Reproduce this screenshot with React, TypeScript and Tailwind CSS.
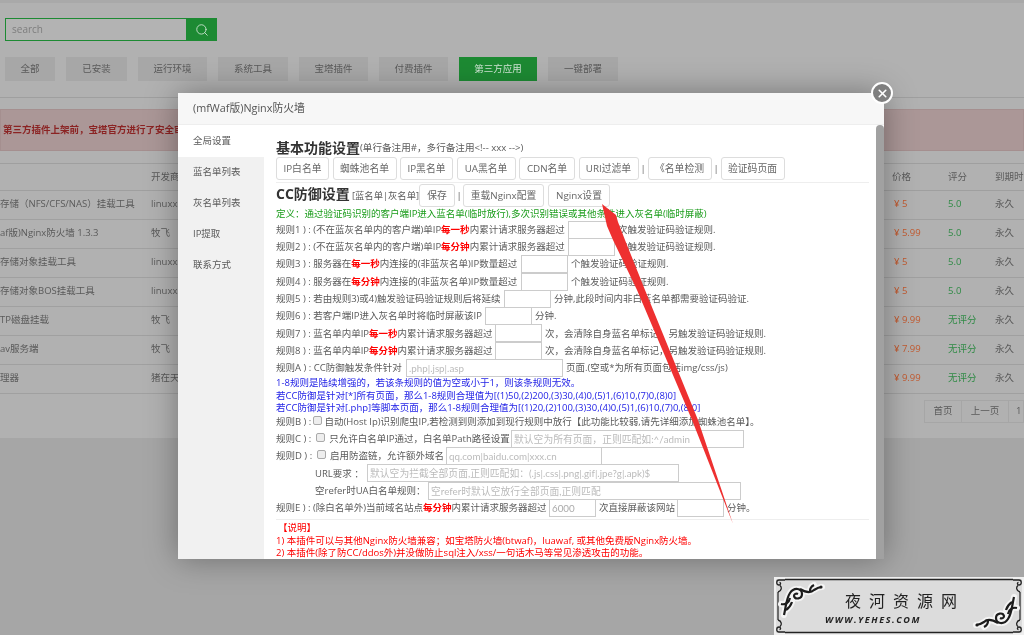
import { Search, X } from "lucide-react";
import type { ReactNode } from "react";

const tabs = [
    { name: "全部", w: "w-[50px]" },
    { name: "已安装", w: "w-[61px]" },
    { name: "运行环境", w: "w-[69px]" },
    { name: "系统工具", w: "w-[70px]" },
    { name: "宝塔插件", w: "w-[69px]" },
    { name: "付费插件", w: "w-[69px]" },
    { name: "第三方应用", w: "w-[78px]", active: true },
    { name: "一键部署", w: "w-[70px]" },
];

const rows = [
    { name: "存储（NFS/CFS/NAS）挂载工具", dev: "linuxxx", price: "5", score: "5.0" },
    { name: "af版)Nginx防火墙 1.3.3", dev: "牧飞", price: "5.99", score: "5.0" },
    { name: "存储对象挂载工具", dev: "linuxxx", price: "5", score: "5.0" },
    { name: "存储对象BOS挂载工具", dev: "linuxxx", price: "5", score: "5.0" },
    { name: "TP磁盘挂载", dev: "牧飞", price: "9.99", score: "无评分" },
    { name: "av服务端", dev: "牧飞", price: "7.99", score: "无评分" },
    { name: "理器", dev: "猪在天上飞", price: "9.99", score: "无评分" },
];

const side = ["全局设置", "蓝名单列表", "灰名单列表", "IP提取", "联系方式"];

function Btn({ w, children }: { w: string; children: ReactNode }) {
    return (
        <div className={`${w} h-[23px] shrink-0 flex items-center justify-center rounded-[3px] border border-[#ddd] text-[#666] text-[9.8px]`}>
            {children}
        </div>
    );
}

function Sep() {
    return <span className="flex w-[2px] shrink-0 justify-center text-[#666]">|</span>;
}

function Red({ children }: { children: ReactNode }) {
    return <b className="text-[#f00]">{children}</b>;
}

function Box({ w = "w-[47px]", ph, val }: { w?: string; ph?: string; val?: string }) {
    return (
        <input
            readOnly
            placeholder={ph}
            defaultValue={val}
            className={`${w} h-[18px] shrink-0 border border-[#ccc] bg-white px-[2px] font-['Lato','Noto_Sans_CJK_SC',sans-serif] text-[9.8px] text-[#aaa] placeholder:text-[#bbb] outline-none`}
        />
    );
}

function Rule({ label, children, after }: { label: string; children: ReactNode; after: string }) {
    return (
        <div className="flex h-[17.3px] items-center whitespace-nowrap">
            <span className={`${label} shrink-0`}>{children}</span>
            <Box />
            <span className="ml-[3px]">{after}</span>
        </div>
    );
}

function Check() {
    return <span className="mx-[2px] mb-[3px] inline-block h-[9px] w-[9px] shrink-0 rounded-[2px] border border-[#aaa] bg-[#eee] align-middle" />;
}

const ornament = [
    "M10 38C12 30 12 22 16 16C20 10 28 11 28 17C28 22 21 23 20 19C20 17 22 16 24 17",
    "M26 12C31 15 36 17 40 13C43 11 45 10 48 10",
    "M7 27C11 28 15 26 16 21",
    "M12 33C15 31 17 28 18 25",
    "M36 14C36 11 38 9 40 8",
];

function Watermark() {
    return (
        <svg className="absolute inset-0 h-[58px] w-[250px]" viewBox="0 0 250 58" fill="none">
            <rect width="250" height="58" fill="#dcdcdc" />
            <path d="M1 1H249V57H1Z" stroke="#efefef" strokeWidth="2" />
            <path d="M11 2.5H239M11 55.5H239" stroke="#222" strokeWidth="1.5" />
            <path d="M4 15V43M246 15V43" stroke="#222" strokeWidth="1.2" />
            {["", "translate(250 0) scale(-1 1)", "translate(0 58) scale(1 -1)", "translate(250 58) scale(-1 -1)"].map((t) => (
                <path key={t} transform={t} d="M11 3H5C2 3 2 8 5 8C7 8 7 5.5 5.5 5.5M6 8.5C8 10 8 14 4 15" stroke="#222" strokeWidth="1.3" />
            ))}
            {["", "rotate(180 125 29)"].map((t) => (
                <g key={t} transform={t}>
                    {ornament.map((d) => (
                        <path key={d} d={d} stroke="#f4f4f4" strokeWidth="6" strokeLinecap="round" />
                    ))}
                    {ornament.map((d) => (
                        <path key={d} d={d} stroke="#1c1c1c" strokeWidth="2.2" />
                    ))}
                    <circle cx="47" cy="10" r="1.6" fill="#1c1c1c" />
                </g>
            ))}
        </svg>
    );
}

export default function App() {
    return (
        <div className="relative flex h-[635px] w-full flex-col overflow-hidden bg-[#a6a6a6] font-['Open_Sans','Noto_Sans_CJK_SC',sans-serif] text-[9.5px] text-[#5a5a5a] blur-[0.3px]">
            {/* page under the dialog */}
            <div className="h-[438px] shrink-0 bg-[#b1b1b1]">
                <div className="h-[18px]"><div className="h-[3px] bg-[#a9a9a9]" /></div>
                <div className="ml-[5px] flex h-[23px] w-[212px]">
                    <div className="flex flex-1 items-center border border-[#1d8a33] bg-[#b3b3b3] pl-[6px] text-[10px] text-[#7d7d7d]">search</div>
                    <div className="flex w-[30px] items-center justify-center bg-[#1d8a33]">
                        <Search size={14} strokeWidth={1.5} className="text-[#cfe5d4]" />
                    </div>
                </div>

                <div className="mt-[16px] flex gap-[11px] pl-[5px]">
                    {tabs.map((t) => (
                        <div
                            key={t.name}
                            className={`${t.w} flex h-[24px] shrink-0 items-center justify-center ${t.active ? "bg-[#1d8a33] text-[#cfe5d4]" : "bg-[#a7a7a7] text-[#5a5a5a]"}`}
                        >
                            {t.name}
                        </div>
                    ))}
                </div>

                <div className="mt-[16px] h-[1px] bg-[#9f9f9f]" />
                <div className="mt-[11px] flex h-[42px] items-center border border-[#a58f8f] bg-[#ab9797] pl-[2px] font-bold text-[#8b2323]">
                    第三方插件上架前，宝塔官方进行了安全审核
                </div>
                <div className="mt-[12px] h-[1px] bg-[#9f9f9f]" />

                <div className="flex h-[27px] items-center border-b border-[#9f9f9f]">
                    <div className="w-[151px] shrink-0" />
                    <div className="flex-1">开发商</div>
                    <div className="w-[56px]">价格</div>
                    <div className="w-[47px]">评分</div>
                    <div className="w-[29px] overflow-hidden whitespace-nowrap">到期时间</div>
                </div>
                {rows.map((r) => (
                    <div key={r.name} className="flex h-[29px] items-center border-b border-[#a0a0a0] pb-[2px]">
                        <div className="w-[151px] shrink-0 overflow-hidden whitespace-nowrap">{r.name}</div>
                        <div className="flex-1 whitespace-nowrap">{r.dev}</div>
                        <div className="w-[56px] pl-[2px] text-[#c2592e]">¥ {r.price}</div>
                        <div className="w-[47px] text-[#2f8a45]">{r.score}</div>
                        <div className="w-[29px]">永久</div>
                    </div>
                ))}
                <div className="mt-[6px] flex justify-end">
                    <div className="flex h-[23px] w-[100px] items-center overflow-hidden border border-[#a6a6a6]">
                        <div className="flex h-full w-[37px] shrink-0 items-center justify-center border-r border-[#a6a6a6]">首页</div>
                        <div className="flex h-full w-[47px] shrink-0 items-center justify-center border-r border-[#a6a6a6]">上一页</div>
                        <div className="pl-[7px]">1</div>
                    </div>
                </div>
            </div>

            {/* dialog */}
            <div className="absolute left-[178px] top-[93px] flex h-[466px] w-[706px] flex-col bg-white shadow-[0_0_30px_rgba(0,0,0,0.35)]">
                <div className="flex h-[32px] shrink-0 items-center border-b border-[#eee] bg-[#f7f7f7] pl-[15px] text-[10.8px] text-[#555]">
                    (mfWaf版)Nginx防火墙
                </div>
                <div className="flex min-h-0 flex-1">
                    <div className="w-[86px] shrink-0 bg-[#f1f1f1]">
                        {side.map((s, i) => (
                            <div key={s} className={`flex items-center pl-[15px] ${i === 0 ? "h-[32px] bg-white" : "h-[31px]"}`}>
                                {s}
                            </div>
                        ))}
                    </div>
                    <div className="min-w-0 flex-1 pl-[12px] pt-[13px] leading-none">
                        <div className="flex h-[19px] items-center whitespace-nowrap">
                            <b className="text-[14px] text-[#333]">基本功能设置</b>
                            <span className="text-[9.6px]">(单行备注用#，多行备注用&lt;!-- xxx --&gt;)</span>
                        </div>
                        <div className="flex items-center gap-[3.5px]">
                            <Btn w="w-[53px]">IP白名单</Btn>
                            <Btn w="w-[64px]">蜘蛛池名单</Btn>
                            <Btn w="w-[53px]">IP黑名单</Btn>
                            <Btn w="w-[59px]">UA黑名单</Btn>
                            <Btn w="w-[56px]">CDN名单</Btn>
                            <Btn w="w-[60px]">URI过滤单</Btn>
                            <Sep />
                            <Btn w="w-[64px]">《名单检测</Btn>
                            <Sep />
                            <Btn w="w-[64px]">验证码页面</Btn>
                        </div>
                        <div className="mr-[15px] mt-[2px] h-[1px] bg-[#eee]" />
                        <div className="mt-[1px] flex items-center whitespace-nowrap">
                            <b className="w-[76px] shrink-0 pb-[3px] text-[14px] text-[#333]">CC防御设置</b>
                            <span className="w-[67px] shrink-0 text-[9.3px]">[蓝名单|灰名单]</span>
                            <Btn w="w-[36px]">保存</Btn>
                            <span className="w-[8px] shrink-0 text-center">|</span>
                            <Btn w="w-[81px]">重载Nginx配置</Btn>
                            <span className="w-[4px] shrink-0" />
                            <Btn w="w-[62px]">Nginx设置</Btn>
                        </div>
                        <div className="flex h-[14px] items-center whitespace-nowrap text-[#1a9c1a]">
                            定义：通过验证码识别的客户端IP进入蓝名单(临时放行),多次识别错误或其他条件进入灰名单(临时屏蔽)
                        </div>
                        <Rule label="w-[292px]" after="次触发验证码验证规则.">规则1 ) : (不在蓝灰名单内的客户端)单IP<Red>每一秒</Red>内累计请求服务器超过</Rule>
                        <Rule label="w-[292px]" after="次触发验证码验证规则.">规则2 ) : (不在蓝灰名单内的客户端)单IP<Red>每分钟</Red>内累计请求服务器超过</Rule>
                        <Rule label="w-[245px]" after="个触发验证码验证规则.">规则3 ) : 服务器在<Red>每一秒</Red>内连接的(非蓝灰名单)IP数量超过</Rule>
                        <Rule label="w-[245px]" after="个触发验证码验证规则.">规则4 ) : 服务器在<Red>每分钟</Red>内连接的(非蓝灰名单)IP数量超过</Rule>
                        <Rule label="w-[228px]" after="分钟,此段时间内非白蓝名单都需要验证码验证.">规则5 ) : 若由规则3)或4)触发验证码验证规则后将延续</Rule>
                        <Rule label="w-[209px]" after="分钟.">规则6 ) : 若客户端IP进入灰名单时将临时屏蔽该IP</Rule>
                        <Rule label="w-[219px]" after="次，会清除自身蓝名单标记，另触发验证码验证规则.">规则7 ) : 蓝名单内单IP<Red>每一秒</Red>内累计请求服务器超过</Rule>
                        <Rule label="w-[219px]" after="次，会清除自身蓝名单标记，另触发验证码验证规则.">规则8 ) : 蓝名单内单IP<Red>每分钟</Red>内累计请求服务器超过</Rule>
                        <div className="flex h-[17.3px] items-center whitespace-nowrap">
                            <span className="w-[130px] shrink-0">规则A ) : CC防御触发条件针对</span>
                            <Box w="w-[157px]" ph=".php|.jsp|.asp" />
                            <span className="ml-[3px]">页面.(空或*为所有页面包括img/css/js)</span>
                        </div>
                        <div className="whitespace-nowrap text-[#2323e6]">
                            <div className="flex h-[12.5px] items-center">1-8规则是陆续增强的，若该条规则的值为空或小于1，则该条规则无效。</div>
                            <div className="flex h-[12.5px] items-center">若CC防御是针对[*]所有页面，那么1-8规则合理值为[(1)50,(2)200,(3)30,(4)0,(5)1,(6)10,(7)0,(8)0]</div>
                            <div className="flex h-[12.5px] items-center">若CC防御是针对[.php]等脚本页面，那么1-8规则合理值为[(1)20,(2)100,(3)30,(4)0,(5)1,(6)10,(7)0,(8)0]</div>
                        </div>
                        <div className="flex h-[16px] items-center whitespace-nowrap">
                            规则B ) : <Check /> 自动(Host Ip)识别爬虫IP,若检测到则添加到现行规则中放行【此功能比较弱,请先详细添加蜘蛛池名单】。
                        </div>
                        <div className="flex h-[17.3px] items-center whitespace-nowrap">
                            <span className="w-[235px] shrink-0">规则C ) : <Check /> 只允许白名单IP通过，白名单Path路径设置</span>
                            <Box w="w-[233px]" ph="默认空为所有页面，正则匹配如:^/admin" />
                        </div>
                        <div className="flex h-[17.3px] items-center whitespace-nowrap">
                            <span className="w-[170px] shrink-0">规则D ) : <Check /> 启用防盗链，允许额外域名</span>
                            <Box w="w-[156px]" ph="qq.com|baidu.com|xxx.cn" />
                        </div>
                        <div className="flex h-[17.3px] items-center whitespace-nowrap">
                            <span className="w-[91px] shrink-0 pl-[39px]">URL要求 ：</span>
                            <Box w="w-[312px]" ph="默认空为拦截全部页面,正则匹配如：(.js|.css|.png|.gif|.jpe?g|.apk)$" />
                        </div>
                        <div className="flex h-[17.3px] items-center whitespace-nowrap">
                            <span className="w-[152px] shrink-0 pl-[39px]">空refer时UA白名单规则：</span>
                            <Box w="w-[313px]" ph="空refer时默认空放行全部页面,正则匹配" />
                        </div>
                        <div className="flex h-[17.3px] items-center whitespace-nowrap">
                            <span className="w-[273px] shrink-0">规则E ) : (除白名单外)当前域名站点<Red>每分钟</Red>内累计请求服务器超过</span>
                            <Box val="6000" />
                            <span className="w-[81px] shrink-0 pl-[3px]">次直接屏蔽该网站</span>
                            <Box />
                            <span className="ml-[3px]">分钟。</span>
                        </div>
                        <div className="mr-[15px] mt-[2px] h-[1px] bg-[#eee]" />
                        <div className="mt-[2px] whitespace-nowrap text-[#f00]">
                            <div className="flex h-[12.5px] items-center pl-[2px]">【说明】</div>
                            <div className="flex h-[12.5px] items-center">1) 本插件可以与其他Nginx防火墙兼容；如宝塔防火墙(btwaf)，luawaf, 或其他免费版Nginx防火墙。</div>
                            <div className="flex h-[12.5px] items-center">2) 本插件(除了防CC/ddos外)并没做防止sql注入/xss/一句话木马等常见渗透攻击的功能。</div>
                        </div>
                    </div>
                </div>
                {/* scrollbar */}
                <div className="absolute bottom-0 right-0 top-[32px] w-[8px] rounded-t-[4px] bg-[#a1a1a1]" />
                {/* close */}
                <div className="absolute right-[-9px] top-[-11px] flex h-[22px] w-[22px] items-center justify-center rounded-full border-2 border-white bg-[#7f7f7f]">
                    <X size={13} strokeWidth={3} className="text-white" />
                </div>
            </div>

            {/* red arrow drawn over the shot */}
            <svg className="absolute left-0 top-0 h-[635px] w-[1024px]" viewBox="0 0 1024 635" fill="#ee3030">
                <path d="M602 204L616 215L618 222L625 240L645 290L698 420L733 524L692 420L637 290L613 240L607 226Z" />
            </svg>

            {/* watermark */}
            <div className="absolute left-[774px] top-[577px] h-[58px] w-[250px] whitespace-nowrap pl-[71px] pt-[16px] text-[#222]">
                <Watermark />
                <div className="relative text-[16px] leading-none tracking-[8px]">夜河资源网</div>
                <div className="relative -ml-[20px] mt-[6px] text-[9px] font-bold italic leading-none tracking-[1.6px]">WWW.YEHES.COM</div>
            </div>
        </div>
    );
}
